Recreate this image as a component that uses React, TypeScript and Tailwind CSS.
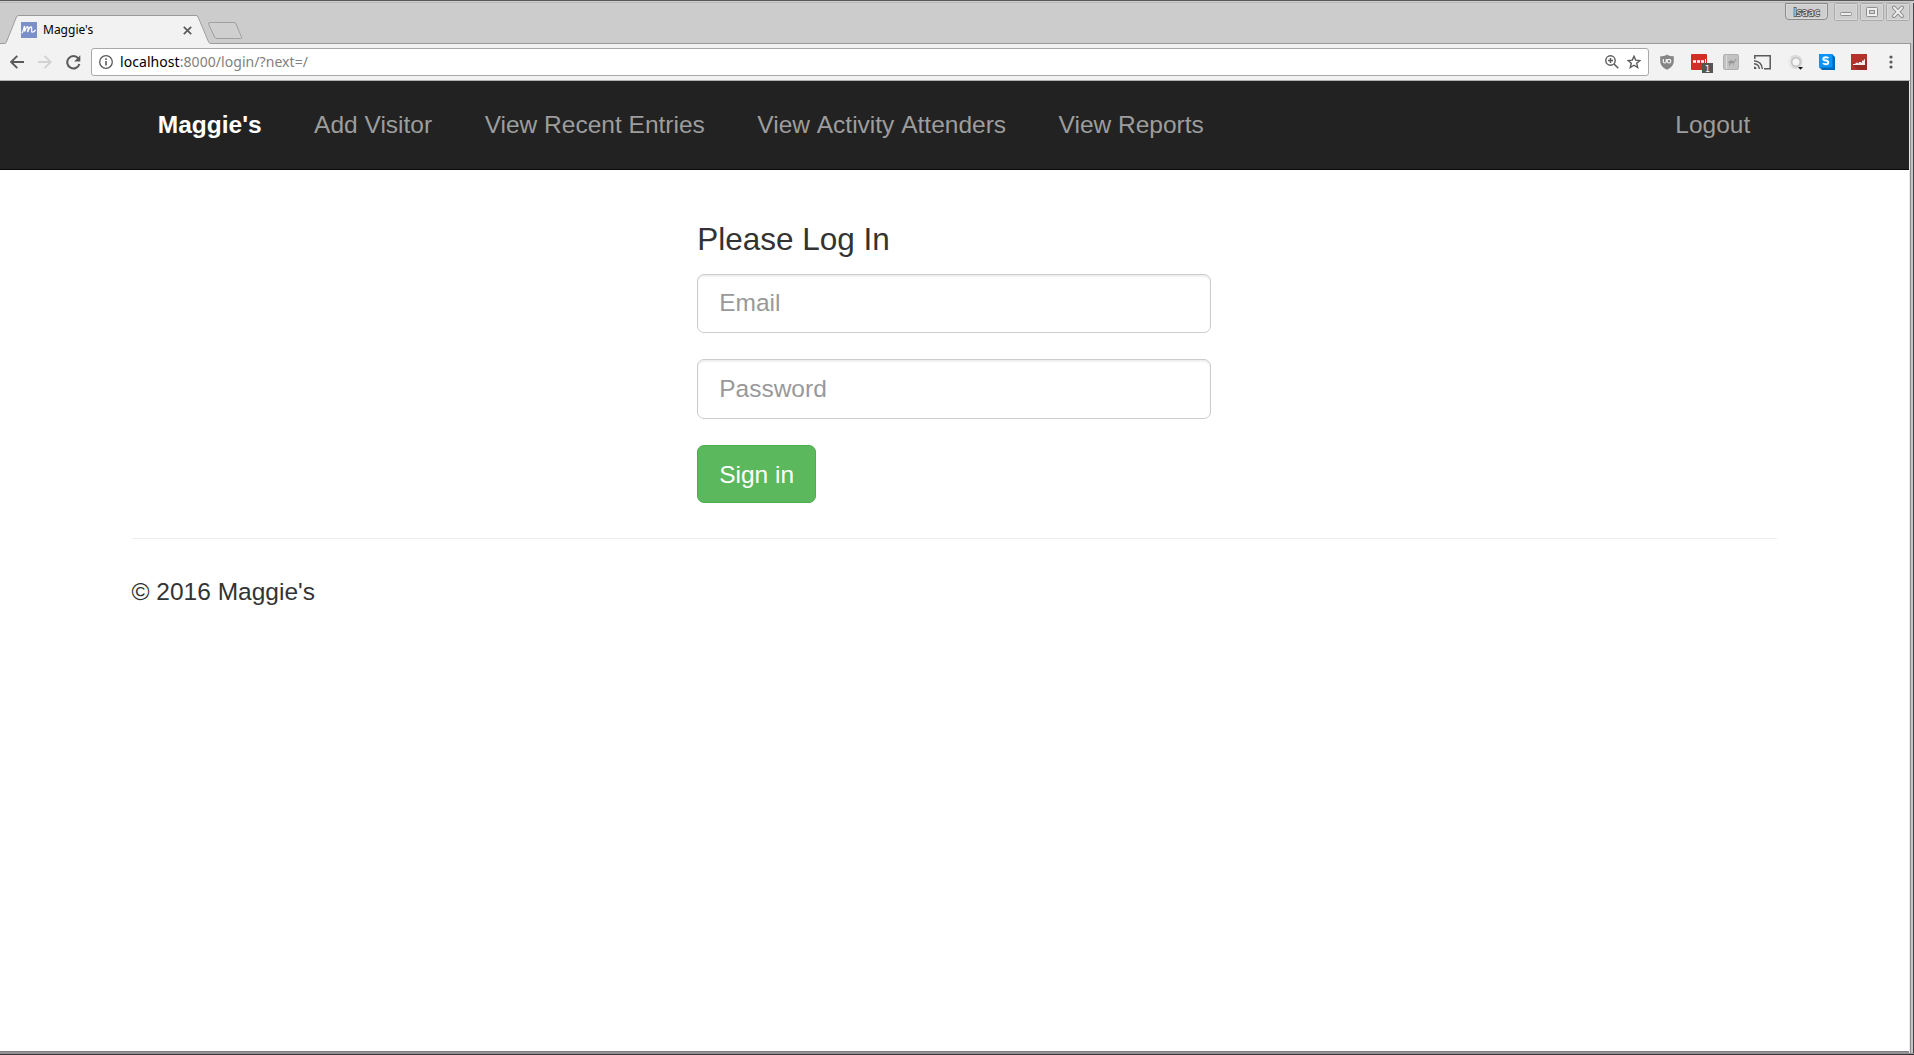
import React from "react";

const navLinks = ["Add Visitor", "View Recent Entries", "View Activity Attenders", "View Reports"];

function TabStrip() {
  return (
    <div className="relative flex h-[44px] shrink-0 border-t border-[#5a5759] bg-[#cccccc]">
      <svg className="absolute left-0 top-0 h-[43px] w-full" width="1914" height="43" aria-hidden="true">
        <path d="M0 1.5H1911" stroke="#b9b9b9" />
        <path d="M0 42.5H4.500Q6 42.500 6.500 41L16.500 16Q17 14.500 18.500 14.500H196Q197.500 14.500 198 16L208.500 41Q209 42.500 210.500 42.500H1911" fill="none" stroke="#999999" />
        <path d="M5.500 43L7 41L17 16L18.500 15H196L197.500 16L208 41L210 43Z" fill="#f2f2f2" />
        <path d="M210 21.500H234Q235.500 21.500 236 23L241.500 36Q242 37.500 240.500 37.500H217Q215 37.500 214.500 36L208.500 23Q208 21.500 210 21.500Z" fill="#cfcfcf" stroke="#a0a0a0" />
      </svg>
      <div className="relative ml-[21px] mt-[21px] flex h-4 w-[173px] items-center">
        <svg width="16" height="16" viewBox="0 0 16 16" aria-hidden="true">
          <rect width="16" height="16" fill="#7b90c8" />
          <path d="M1 11.300C2.300 9 3 6.500 3.500 4L3.700 9.500C4.700 6.500 5.700 4.500 6.700 4.700C7.700 5 6.800 8 6.700 10C7.700 7 9 4.800 10.200 5C11.500 5.300 9.900 9.700 11 10.100C12.100 10.400 13.500 9.300 14.700 7.800" fill="none" stroke="#fff" strokeWidth="1.300" />
        </svg>
        <span className="ml-[6px] font-['Noto_Sans',sans-serif] text-[12px] leading-4 text-black">Maggie's</span>
        <svg className="ml-auto mr-[2px]" width="9" height="9" viewBox="0 0 9 9" aria-hidden="true">
          <path d="M.8 .8L8.200 8.200M8.200 .8L.8 8.200" stroke="#5a5a5a" strokeWidth="1.700" />
        </svg>
      </div>
      <div className="relative ml-auto mr-[4px] flex">
        <div className="mt-[2px] flex h-[17px] w-[43px] items-center justify-center rounded-b-[4px] border border-[#8a8a8a] bg-[#cfcfcf] shadow-[inset_0_0_0_1px_#dadada]">
          <span className="font-['DejaVu_Sans',sans-serif] text-[10.5px] leading-3 tracking-[-0.2px] text-[#e4e4e4] [paint-order:stroke] [-webkit-text-stroke:1.6px_#4a4a4a]">Isaac</span>
        </div>
        <div className="ml-[6px] mt-[2px] flex gap-[2px]">
          {[0, 1, 2].map((i) => (
            <svg key={i} width="24" height="18" viewBox="0 0 24 18" aria-hidden="true">
              <rect x=".5" y=".5" width="23" height="17" rx="1.500" fill="#cfcfcf" stroke="#aaaaaa" />
              <rect x="1.500" y="1.500" width="21" height="15" fill="none" stroke="#d8d8d8" />
              {i === 0 && <rect x="6.500" y="9.500" width="11" height="3" rx="1" fill="#eeeeee" stroke="#8d8d8d" />}
              {i === 1 && (
                <>
                  <rect x="6.500" y="4.500" width="11" height="9" rx="1" fill="#eeeeee" stroke="#8d8d8d" />
                  <rect x="9.500" y="7.500" width="5" height="3" fill="#d0d0d0" stroke="#8d8d8d" />
                </>
              )}
              {i === 2 && (
                <>
                  <path d="M8 4.500L16 13M16 4.500L8 13" stroke="#888888" strokeWidth="4" strokeLinecap="round" />
                  <path d="M8 4.500L16 13M16 4.500L8 13" stroke="#eeeeee" strokeWidth="2" strokeLinecap="round" />
                </>
              )}
            </svg>
          ))}
        </div>
      </div>
    </div>
  );
}

function Extensions() {
  return (
    <div className="flex items-center">
      <svg className="ml-[10px]" width="16" height="16" viewBox="0 0 16 16" aria-hidden="true">
        <path d="M8 .5C10 2 12.500 2.300 14.800 2.300V7C14.800 11 12 14 8 15.700C4 14 1.200 11 1.200 7V2.300C3.500 2.300 6 2 8 .5Z" fill="#858585" />
        <path d="M4.300 5V7.200Q4.300 9 5.800 9Q7.300 9 7.300 7.200V5" fill="none" stroke="#f5f5f5" strokeWidth="1.200" />
        <circle cx="10" cy="7.200" r="1.800" fill="none" stroke="#f5f5f5" strokeWidth="1.200" />
      </svg>
      <svg className="ml-[16px]" width="24" height="22" viewBox="0 0 24 22" aria-hidden="true">
        <rect y="3" width="16" height="16" rx="1" fill="#d32d27" />
        <path d="M2 10.500H5M6 10.500H9M10 10.500H13" stroke="#fff" strokeWidth="2.400" />
        <path d="M14.500 8V13" stroke="#fff" />
        <rect x="11" y="12" width="11" height="10" fill="#555555" />
        <text x="14" y="20.500" fontFamily="DejaVu Sans" fontSize="8" fill="#fff">1</text>
      </svg>
      <svg className="ml-[8px]" width="16" height="16" viewBox="0 0 16 16" aria-hidden="true">
        <rect x=".5" y=".5" width="15" height="15" rx="1.500" fill="#c2c2c2" stroke="#b0b0b0" />
        <path d="M3.500 1V15" stroke="#dddddd" />
        <path d="M5 9L6 7.500Q7 5.500 8 7Q9 5.500 10 7.500L11.300 7L12 5L13.800 5.300L13.200 6.300L12.500 6.200L11.500 8.800L10.500 9V12H10V9.500L7.500 9.300L7 12H6.300V9Z" fill="#959595" />
      </svg>
      <svg className="ml-[15px]" width="17" height="15" viewBox="0 0 17 15" aria-hidden="true">
        <path d="M.8 4V.8H16.200V13.700H10" fill="none" stroke="#5a5a5a" strokeWidth="1.500" />
        <path d="M0 5.700Q8 6.500 8.300 14M0 8.800Q5 9.300 5.300 14" fill="none" stroke="#5a5a5a" strokeWidth="1.400" />
        <path d="M0 11.500Q2.500 11.500 2.500 14H0Z" fill="#5a5a5a" />
      </svg>
      <svg className="ml-[17px]" width="16" height="16" viewBox="0 0 16 16" aria-hidden="true">
        <circle cx="7.500" cy="8" r="7" fill="#dadada" />
        <path d="M3 4A6 6 0 0 0 4 13" stroke="#f5f5f5" fill="none" />
        <circle cx="8" cy="8" r="4.200" fill="#f5f5f5" stroke="#bdbdbd" strokeWidth="1.300" />
        <path d="M10 13H15L12.500 15.800Z" fill="#111111" />
      </svg>
      <svg className="ml-[15px]" width="16" height="16" viewBox="0 0 16 16" aria-hidden="true">
        <path d="M0 0H13L16 3V16H3L0 13Z" fill="#0068b8" />
        <rect width="13.500" height="13.500" fill="#0a94fa" />
        <path d="M9.500 4.200Q9 3.200 6.800 3.200Q4.300 3.200 4.300 4.900Q4.300 6.300 6.800 6.500Q9.300 6.800 9.300 8.400Q9.300 10.200 6.800 10.200Q4.500 10.200 4 9" fill="none" stroke="#fff" strokeWidth="1.900" />
      </svg>
      <svg className="ml-[16px]" width="16" height="16" viewBox="0 0 16 16" aria-hidden="true">
        <rect width="16" height="16" fill="#b5322a" />
        <path d="M2 11L14 5L16 7V16H7Z" fill="#982a24" />
        <path d="M2 11V10H4V9.500L4.500 9.500V10L5 8.800H7V9.500L7.500 9.500L8 8H10V9L10.500 9L11 6.500H13L13.300 5H14V11Z" fill="#f3eeee" />
      </svg>
      <svg className="ml-[22px] mr-[17px]" width="4" height="14" viewBox="0 0 4 14" aria-hidden="true">
        <circle cx="2" cy="2" r="1.600" fill="#5a5a5a" />
        <circle cx="2" cy="7" r="1.600" fill="#5a5a5a" />
        <circle cx="2" cy="12" r="1.600" fill="#5a5a5a" />
      </svg>
    </div>
  );
}

function Toolbar() {
  return (
    <div className="flex h-[37px] w-[1910px] shrink-0 items-center border-b border-[#b0b3b3] bg-[#f2f2f2]">
      <svg className="ml-[10px]" width="14" height="14" viewBox="0 0 14 14" aria-hidden="true">
        <path d="M14 7H1.500M7.300 .8L1.100 7L7.300 13.200" fill="none" stroke="#5a5a5a" strokeWidth="1.900" />
      </svg>
      <svg className="ml-[14px]" width="14" height="14" viewBox="0 0 14 14" aria-hidden="true">
        <path d="M0 7H12.500M6.500 .8L12.700 7L6.500 13.200" fill="none" stroke="#d2d2d2" strokeWidth="1.900" />
      </svg>
      <svg className="ml-[13.5px]" width="15" height="15" viewBox="0 0 15 15" aria-hidden="true">
        <path d="M12.300 3.400A6.200 6.200 0 1 0 13.400 9" fill="none" stroke="#5a5a5a" strokeWidth="2" />
        <path d="M14.300 .3V6.500H8.200Z" fill="#5a5a5a" />
      </svg>
      <div className="ml-[10.5px] flex h-[28px] grow items-center rounded-[3px] border border-[#a9a9a9] bg-white">
        <svg className="ml-[7px]" width="14" height="14" viewBox="0 0 14 14" aria-hidden="true">
          <circle cx="7" cy="7" r="6.300" fill="none" stroke="#5a5a5a" strokeWidth="1.300" />
          <path d="M7 6V10.500M7 3.300V5" stroke="#5a5a5a" strokeWidth="1.600" />
        </svg>
        <span className="ml-[7px] font-['Noto_Sans',sans-serif] text-[14px] leading-5 tracking-[0.06px] text-[#808080]">
          <span className="text-black">localhost</span>:8000/login/?next=/
        </span>
        <svg className="ml-auto" width="14" height="14" viewBox="0 0 14 14" aria-hidden="true">
          <circle cx="5.500" cy="5.500" r="4.700" fill="none" stroke="#5a5a5a" strokeWidth="1.400" />
          <path d="M9 9L13.300 13.300M5.500 3V8M3 5.500H8" stroke="#5a5a5a" strokeWidth="1.500" />
        </svg>
        <svg className="ml-[8px] mr-[7px]" width="14" height="14" viewBox="0 0 14 14" aria-hidden="true">
          <path d="M7 1.300L8.700 5.100L12.900 5.500L9.700 8.300L10.700 12.500L7 10.200L3.300 12.500L4.300 8.300L1.100 5.500L5.300 5.100Z" fill="none" stroke="#5a5a5a" strokeWidth="1.400" />
        </svg>
      </div>
      <Extensions />
    </div>
  );
}

export default function App() {
  return (
    <div className="relative flex h-[1055px] w-[1914px] flex-col overflow-hidden bg-white font-['Liberation_Sans',Arial,sans-serif] text-[24.5px] leading-[35px] text-[#333333]">
      <TabStrip />
      <Toolbar />
      <div className="w-[1909px] grow bg-white">
        <nav className="h-[89px] border-b border-[#080808] bg-[#222222]">
          <div className="ml-[131.5px] flex h-[87.5px] w-[1645px] items-center px-[26.25px] text-[#9d9d9d]">
            <a className="mr-[52.5px] font-bold text-white">Maggie's</a>
            <div className="flex gap-[52.5px]">
              {navLinks.map((label) => (
                <a key={label} className={label.includes(" A") ? "[word-spacing:1.36px]" : undefined}>
                  {label}
                </a>
              ))}
            </div>
            <a className="ml-auto">Logout</a>
          </div>
        </nav>
        <main className="ml-[131.5px] w-[1645px]">
          <form className="ml-[565.7px] flex w-[514px] flex-col items-start" onSubmit={(e) => e.preventDefault()}>
            <h2 className="mt-[52px] text-[31.5px] leading-[35px]">Please Log In</h2>
            <input
              type="text"
              placeholder="Email"
              className="mt-[17px] h-[59px] w-full rounded-[7px] border border-[#cccccc] px-[21px] pb-[2px] shadow-[inset_0_1.75px_1.75px_rgba(0,0,0,0.075)] outline-none placeholder:text-[#999999]"
            />
            <input
              type="password"
              placeholder="Password"
              className="mt-[26px] h-[60px] w-full rounded-[7px] border border-[#cccccc] px-[21px] shadow-[inset_0_1.75px_1.75px_rgba(0,0,0,0.075)] outline-none placeholder:text-[#999999]"
            />
            <button type="submit" className="mt-[26px] h-[58px] rounded-[7px] border border-[#4cae4c] bg-[#5cb85c] px-[21px] text-white">
              Sign in
            </button>
          </form>
          <hr className="mt-[35px] border-t border-[#eeeeee]" />
          <footer className="mt-[35px]">© 2016 Maggie's</footer>
        </main>
      </div>
      <div className="h-[4px] shrink-0 border-b border-[#353335] bg-[#959395] shadow-[inset_0_1px_0_#828082]" />
      <div className="absolute bottom-[2px] right-px top-[43px] flex w-[4px]">
        <div className="mt-[38px] w-px bg-[#e8e8e8]" />
        <div className="w-px bg-[#8c8c8c]" />
        <div className="w-[2px] bg-[#c4c4c4]" />
      </div>
      <div className="absolute bottom-[2px] right-0 top-[3px] w-px bg-[#444244]" />
    </div>
  );
}
